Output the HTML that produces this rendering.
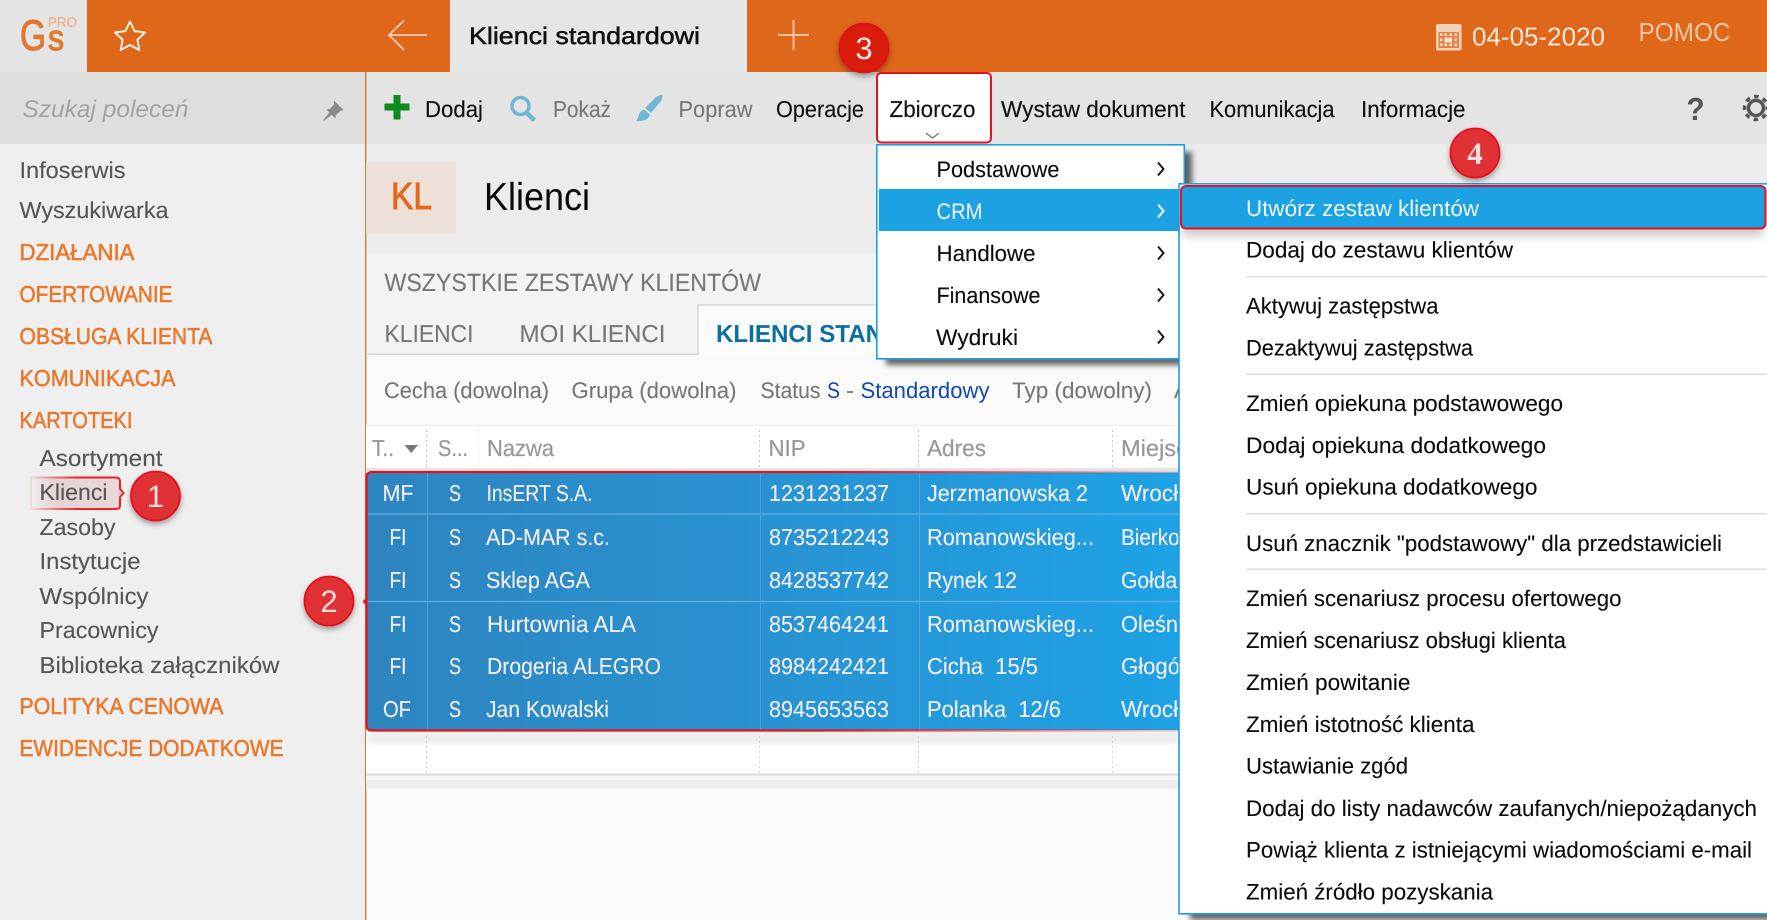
<!DOCTYPE html>
<html lang="pl"><head><meta charset="utf-8"><title>Klienci standardowi</title>
<style>
html,body{margin:0;padding:0;background:#fafafa;width:1767px;height:920px;overflow:hidden}
svg{display:block}
text{font-family:"Liberation Sans","Noto Sans CJK JP",sans-serif;font-size:23px;text-rendering:geometricPrecision}
.n{fill:#555;stroke:#555;stroke-width:.12}.o{fill:#ea772a;stroke:#ea772a;stroke-width:.55}.k{fill:#111;stroke:#111;stroke-width:.15}.g{fill:#777;stroke:#777;stroke-width:.12}.h{fill:#999;stroke:#999;stroke-width:.25}.w{fill:#f4eeee}.m{fill:#0c0c0c;font-size:22.5px;stroke:#0c0c0c;stroke-width:.12}
.b{font-size:31px}
</style></head><body>
<svg xmlns="http://www.w3.org/2000/svg" width="1767" height="920" viewBox="0 0 1767 920">
<defs>
<linearGradient id="blue" x1="0" x2="1" y1="0" y2="0"><stop offset="0" stop-color="#2d85bf"/><stop offset=".5" stop-color="#2893d3"/><stop offset="1" stop-color="#1da3e6"/></linearGradient>
<linearGradient id="redf" x1="0" x2="1" y1="0" y2="0"><stop offset="0" stop-color="#e8101c"/><stop offset=".55" stop-color="#e8101c"/><stop offset="1" stop-color="#e8101c" stop-opacity=".15"/></linearGradient>
<linearGradient id="kl" x1="0" x2="1" y1="0" y2="0"><stop offset="0" stop-color="#e6d0d0" stop-opacity="0"/><stop offset=".25" stop-color="#e6d4d4"/><stop offset="1" stop-color="#ead8d8"/></linearGradient>
<linearGradient id="klr" x1="0" x2="1" y1="0" y2="0"><stop offset="0" stop-color="#ee2024" stop-opacity=".1"/><stop offset=".5" stop-color="#ee2024"/><stop offset="1" stop-color="#ee2024"/></linearGradient>
<filter id="bl3" x="-10%" y="-10%" width="120%" height="120%"><feGaussianBlur stdDeviation="3"/></filter>
<filter id="bl6" x="-20%" y="-50%" width="140%" height="200%"><feGaussianBlur stdDeviation="5"/></filter>
<filter id="sh" x="-40%" y="-40%" width="180%" height="180%"><feDropShadow dx="0" dy="3" stdDeviation="3" flood-color="#000" flood-opacity=".35"/></filter>
</defs>

<!-- backgrounds -->
<rect width="1767" height="920" fill="#fafafa"/>
<rect x="0" y="144" width="365" height="776" fill="#efefef"/>
<rect x="0" y="72" width="365" height="72" fill="#dedede"/>
<rect x="366" y="72" width="1401" height="72" fill="#e4e4e4"/>
<rect x="366" y="144" width="1401" height="109" fill="#ececec"/>
<rect x="366" y="253" width="1401" height="102" fill="#f3f3f3"/>
<rect x="366" y="355" width="1401" height="70" fill="#fafafa"/>
<rect x="365" y="72" width="1.4" height="848" fill="#e0762f"/>

<!-- top bar -->
<rect x="0" y="0" width="87" height="72" fill="#e4e4e4"/>
<rect x="87" y="0" width="363" height="72" fill="#de6719"/>
<rect x="450" y="0" width="297" height="72" fill="#e6e6e6"/>
<rect x="747" y="0" width="1020" height="72" fill="#de6719"/>
<text x="20" y="50" style="font-size:43px" fill="#e2772f" stroke="#e2772f" stroke-width="1.2" textLength="26" lengthAdjust="spacingAndGlyphs">G</text>
<text x="48" y="50" style="font-size:36px" fill="#e2772f" stroke="#e2772f" stroke-width="1.2" textLength="16" lengthAdjust="spacingAndGlyphs">s</text>
<text x="48" y="27" style="font-size:14px" fill="#eeb28a" stroke="#eeb28a" stroke-width=".3" textLength="29" lengthAdjust="spacingAndGlyphs">PRO</text>
<path d="M130 22.500l4.600 9.600 10.400 1.400-7.600 7.200 1.900 10.300-9.300-5-9.300 5 1.900-10.300-7.600-7.200 10.400-1.400z" fill="none" stroke="#fbeee5" stroke-width="2" stroke-linejoin="round" transform="translate(0 -1)"/>
<path d="M427 35H389M404 20.500L389 35l15 15" fill="none" stroke="#f3cdb4" stroke-width="1.800"/>
<text x="469" y="44" style="font-size:24px" fill="#111" stroke="#111" stroke-width=".5" textLength="231" lengthAdjust="spacingAndGlyphs">Klienci standardowi</text>
<path d="M793.500 20v30M778 35h31" stroke="#f3cdb4" stroke-width="1.800" fill="none"/>
<!-- calendar -->
<rect x="1436" y="24" width="25.500" height="26.500" rx="2" fill="#f4d0b8"/>
<rect x="1438.500" y="32" width="20.500" height="16" fill="#e2854a"/>
<g fill="#f7dfce"><path d="M1440 33.500h2.500v2.500h-2.500zM1444.500 33.500h2.500v2.500h-2.500zM1449.500 33.500h2.500v2.500h-2.500zM1454.500 33.500h2.500v2.500h-2.500zM1440 38.500h2.500v2.500h-2.500zM1454.500 38.500h2.500v2.500h-2.500zM1440 43.500h2.500v2.500h-2.500zM1444.500 43.500h2.500v2.500h-2.500zM1449.500 43.500h2.500v2.500h-2.500zM1454.500 43.500h2.500v2.500h-2.500z"/><rect x="1444.500" y="37.500" width="7.500" height="5"/></g>
<text x="1472" y="45.500" style="font-size:26px" fill="#fbe7da" textLength="133" lengthAdjust="spacingAndGlyphs">04-05-2020</text>
<text x="1638.500" y="41" style="font-size:26px" fill="#f2c6a8" textLength="92" lengthAdjust="spacingAndGlyphs">POMOC</text>

<!-- sidebar -->
<text x="22.500" y="117" style="font-size:24px;font-style:italic" fill="#a2a2a2" textLength="166" lengthAdjust="spacingAndGlyphs">Szukaj poleceń</text>
<g fill="#8a8a8a"><path d="M334 100.500l9.500 9.500-3 .8-4.800 4.500-.3 3.200-9-9 3.200-.3 4.500-4.800z"/><path d="M323.500 120.500l7.500-9 1.800 1.800z" stroke="#8a8a8a" stroke-width="1"/></g>
<text x="19.500" y="178" class="n" textLength="106" lengthAdjust="spacingAndGlyphs">Infoserwis</text>
<text x="19.500" y="218" class="n" textLength="149" lengthAdjust="spacingAndGlyphs">Wyszukiwarka</text>
<text x="19.500" y="260" class="o" textLength="115" lengthAdjust="spacingAndGlyphs">DZIAŁANIA</text>
<text x="19.500" y="302" class="o" textLength="153" lengthAdjust="spacingAndGlyphs">OFERTOWANIE</text>
<text x="19.500" y="344" class="o" textLength="193" lengthAdjust="spacingAndGlyphs">OBSŁUGA KLIENTA</text>
<text x="19.500" y="386" class="o" textLength="156" lengthAdjust="spacingAndGlyphs">KOMUNIKACJA</text>
<text x="19.500" y="428" class="o" textLength="113" lengthAdjust="spacingAndGlyphs">KARTOTEKI</text>
<text x="39.500" y="466" class="n" textLength="123" lengthAdjust="spacingAndGlyphs">Asortyment</text>
<path d="M31 477.500h85q4 0 4 4v7.500l3.500 4-3.500 4v8q0 4-4 4h-85z" fill="url(#kl)" stroke="url(#klr)" stroke-width="2"/>
<text x="39.500" y="500" class="n" textLength="68" lengthAdjust="spacingAndGlyphs">Klienci</text>
<text x="39.500" y="535" class="n" textLength="76" lengthAdjust="spacingAndGlyphs">Zasoby</text>
<text x="39.500" y="569" class="n" textLength="101" lengthAdjust="spacingAndGlyphs">Instytucje</text>
<text x="39.500" y="604" class="n" textLength="109" lengthAdjust="spacingAndGlyphs">Wspólnicy</text>
<text x="39.500" y="638" class="n" textLength="119" lengthAdjust="spacingAndGlyphs">Pracownicy</text>
<text x="39.500" y="673" class="n" textLength="240" lengthAdjust="spacingAndGlyphs">Biblioteka załączników</text>
<text x="19.500" y="714" class="o" textLength="204" lengthAdjust="spacingAndGlyphs">POLITYKA CENOWA</text>
<text x="19.500" y="756" class="o" textLength="264" lengthAdjust="spacingAndGlyphs">EWIDENCJE DODATKOWE</text>

<!-- toolbar -->
<path d="M393.500 95h7v8.500h9v7h-9v9h-7v-9h-9v-7h9z" fill="#0f8a1f"/>
<text x="425" y="117" class="k" textLength="58" lengthAdjust="spacingAndGlyphs">Dodaj</text>
<circle cx="520.500" cy="106" r="8.500" fill="none" stroke="#6fb7d2" stroke-width="3.500"/>
<path d="M526.500 112.500l8 8" stroke="#6fb7d2" stroke-width="4.500" fill="none"/>
<text x="553" y="117" class="g" textLength="58" lengthAdjust="spacingAndGlyphs">Pokaż</text>
<path d="M662 95c1 2 0 4-1 6l-10 12-6-5 11-11c2-1 4-2 6-2z" fill="#6fb7d2"/>
<path d="M644 109.500c-4 1-5 5-6 8-.3 1.500-1 2.500-2 3.500 6 .5 13-1 14-6.500z" fill="#6fb7d2"/>
<text x="678.500" y="117" class="g" textLength="74" lengthAdjust="spacingAndGlyphs">Popraw</text>
<text x="776" y="117" class="k" textLength="88" lengthAdjust="spacingAndGlyphs">Operacje</text>
<rect x="877" y="73" width="114" height="69.500" rx="4" fill="#fff" stroke="#e8101c" stroke-width="2"/>
<text x="889.500" y="117" class="k" textLength="86" lengthAdjust="spacingAndGlyphs">Zbiorczo</text>
<path d="M926 133l6.500 5 6.500-5" fill="none" stroke="#777" stroke-width="1.300"/>
<text x="1001" y="117" class="k" textLength="184.500" lengthAdjust="spacingAndGlyphs">Wystaw dokument</text>
<text x="1209.500" y="117" class="k" textLength="125" lengthAdjust="spacingAndGlyphs">Komunikacja</text>
<text x="1361" y="117" class="k" textLength="104.500" lengthAdjust="spacingAndGlyphs">Informacje</text>
<text x="1686.500" y="120" style="font-size:32px;font-weight:700" fill="#555" textLength="18" lengthAdjust="spacingAndGlyphs">?</text>
<circle cx="1756" cy="108" r="7.500" fill="none" stroke="#555" stroke-width="3.500"/>
<circle cx="1756" cy="108" r="11.500" fill="none" stroke="#555" stroke-width="3.500" stroke-dasharray="4.500 4.530" stroke-dashoffset="2.250"/>

<!-- title -->
<rect x="366" y="162" width="90" height="72" fill="#ede0d9"/>
<text x="391" y="209" style="font-size:38px" fill="#e2691b" stroke="#e2691b" stroke-width=".9" textLength="41" lengthAdjust="spacingAndGlyphs">KL</text>
<text x="484" y="210" style="font-size:39px" fill="#0a0a0a" textLength="106" lengthAdjust="spacingAndGlyphs">Klienci</text>
<text x="384.500" y="291" style="font-size:25px" class="g" textLength="376.500" lengthAdjust="spacingAndGlyphs">WSZYSTKIE ZESTAWY KLIENTÓW</text>

<!-- tabs -->
<rect x="366" y="353.500" width="332" height="1.500" fill="#d8d8d8"/>
<rect x="698.500" y="305.500" width="200" height="50" fill="#fbfbfb"/>
<path d="M698 355V305H880" fill="none" stroke="#dcdcdc" stroke-width="1.800"/>
<text x="384.500" y="342" style="font-size:24.500px" class="g" textLength="89" lengthAdjust="spacingAndGlyphs">KLIENCI</text>
<text x="519.500" y="342" style="font-size:24.500px" class="g" textLength="146" lengthAdjust="spacingAndGlyphs">MOI KLIENCI</text>
<text x="716" y="342" style="font-size:24.500px;font-weight:700" fill="#0b709f" textLength="285" lengthAdjust="spacingAndGlyphs">KLIENCI STANDARDOWI</text>

<!-- filters -->
<text x="384" y="398" style="font-size:22.500px" class="g" textLength="165" lengthAdjust="spacingAndGlyphs">Cecha (dowolna)</text>
<text x="571.500" y="398" style="font-size:22.500px" class="g" textLength="165" lengthAdjust="spacingAndGlyphs">Grupa (dowolna)</text>
<text x="760.500" y="398" style="font-size:22.500px" class="g" textLength="60" lengthAdjust="spacingAndGlyphs">Status</text>
<text x="827" y="398" style="font-size:22.500px" fill="#1448b0" textLength="13" lengthAdjust="spacingAndGlyphs">S</text>
<text x="846" y="398" style="font-size:22.500px" class="g" textLength="8" lengthAdjust="spacingAndGlyphs">-</text>
<text x="860.500" y="398" style="font-size:22.500px" fill="#1448b0" textLength="129" lengthAdjust="spacingAndGlyphs">Standardowy</text>
<text x="1012" y="398" style="font-size:22.500px" class="g" textLength="140" lengthAdjust="spacingAndGlyphs">Typ (dowolny)</text>
<text x="1174" y="398" style="font-size:22.500px" class="g">Adres</text>

<!-- table -->
<rect x="366" y="425" width="1401" height="47" fill="#fff"/>
<rect x="366" y="424.500" width="1401" height="1.500" fill="#f0f0f0"/>
<rect x="366" y="468" width="1401" height="3" fill="#e4e4e4"/>
<g stroke="#c9c9c9" stroke-width="1" stroke-dasharray="2 3" fill="none"><path d="M426.500 430V470M759.500 430V470M918.500 430V470M1112.500 430V470"/></g>
<g stroke="#efefef" stroke-width="1" stroke-dasharray="2 3" fill="none"><path d="M479 430V470"/></g>
<text x="372" y="456" class="h" textLength="22" lengthAdjust="spacingAndGlyphs">T..</text>
<path d="M404.500 445h13.500l-6.700 8z" fill="#777"/>
<text x="438" y="456" class="h" textLength="30" lengthAdjust="spacingAndGlyphs">S...</text>
<text x="487" y="456" class="h" textLength="67" lengthAdjust="spacingAndGlyphs">Nazwa</text>
<text x="768.500" y="456" class="h" textLength="37" lengthAdjust="spacingAndGlyphs">NIP</text>
<text x="927" y="456" class="h" textLength="59" lengthAdjust="spacingAndGlyphs">Adres</text>
<text x="1121" y="456" class="h" textLength="80" lengthAdjust="spacingAndGlyphs">Miejsce</text>

<rect x="366" y="731" width="1401" height="43" fill="#fff"/>
<rect x="366" y="733" width="820" height="8" fill="#000" opacity=".12" filter="url(#bl6)"/>
<g stroke="#d3d3d3" stroke-width="1" stroke-dasharray="2 3" fill="none"><path d="M426.500 736V778M759.500 736V778M918.500 736V778M1112.500 736V778"/></g>
<rect x="366" y="773.500" width="1401" height="2" fill="#d9d9d9"/>
<rect x="366" y="775.500" width="1401" height="4.500" fill="#f6f6f6"/>
<rect x="366" y="780" width="1401" height="9" fill="#eeeeee"/>

<rect x="367" y="472.500" width="830" height="257.500" rx="5" fill="url(#blue)"/>
<g stroke="#5fb0e2" stroke-width="1.200" fill="none"><path d="M367 514H1190M367 601.500H1190"/></g>
<g stroke="#4da4dd" stroke-width="1" fill="none"><path d="M427.500 473V730M760.500 473V730M919.500 473V730"/></g>
<rect x="366.500" y="472" width="832" height="258.500" rx="5" fill="none" stroke="url(#redf)" stroke-width="2.200"/>
<path d="M367 597l-4.500 4.500 4.500 4.500z" fill="#e8101c"/>

<g class="w" stroke="#f4eeee" stroke-width=".12">
<text class="w" x="382.500" y="501" textLength="31" lengthAdjust="spacingAndGlyphs">MF</text>
<text class="w" x="389.500" y="545" textLength="17" lengthAdjust="spacingAndGlyphs">FI</text>
<text class="w" x="389.500" y="588" textLength="17" lengthAdjust="spacingAndGlyphs">FI</text>
<text class="w" x="389.500" y="632" textLength="17" lengthAdjust="spacingAndGlyphs">FI</text>
<text class="w" x="389.500" y="674" textLength="17" lengthAdjust="spacingAndGlyphs">FI</text>
<text class="w" x="383" y="717" textLength="28" lengthAdjust="spacingAndGlyphs">OF</text>
<text class="w" x="449" y="501" textLength="12" lengthAdjust="spacingAndGlyphs">S</text>
<text class="w" x="449" y="545" textLength="12" lengthAdjust="spacingAndGlyphs">S</text>
<text class="w" x="449" y="588" textLength="12" lengthAdjust="spacingAndGlyphs">S</text>
<text class="w" x="449" y="632" textLength="12" lengthAdjust="spacingAndGlyphs">S</text>
<text class="w" x="449" y="674" textLength="12" lengthAdjust="spacingAndGlyphs">S</text>
<text class="w" x="449" y="717" textLength="12" lengthAdjust="spacingAndGlyphs">S</text>
<text class="w" x="486.500" y="501" textLength="106" lengthAdjust="spacingAndGlyphs">InsERT S.A.</text>
<text class="w" x="486" y="545" textLength="124" lengthAdjust="spacingAndGlyphs">AD-MAR s.c.</text>
<text class="w" x="486" y="588" textLength="104" lengthAdjust="spacingAndGlyphs">Sklep AGA</text>
<text class="w" x="487" y="632" textLength="149" lengthAdjust="spacingAndGlyphs">Hurtownia ALA</text>
<text class="w" x="487" y="674" textLength="174" lengthAdjust="spacingAndGlyphs">Drogeria ALEGRO</text>
<text class="w" x="486" y="717" textLength="123" lengthAdjust="spacingAndGlyphs">Jan Kowalski</text>
<text class="w" x="769" y="501" textLength="120" lengthAdjust="spacingAndGlyphs">1231231237</text>
<text class="w" x="769" y="545" textLength="120" lengthAdjust="spacingAndGlyphs">8735212243</text>
<text class="w" x="769" y="588" textLength="120" lengthAdjust="spacingAndGlyphs">8428537742</text>
<text class="w" x="769" y="632" textLength="120" lengthAdjust="spacingAndGlyphs">8537464241</text>
<text class="w" x="769" y="674" textLength="120" lengthAdjust="spacingAndGlyphs">8984242421</text>
<text class="w" x="769" y="717" textLength="120" lengthAdjust="spacingAndGlyphs">8945653563</text>
<text class="w" x="927" y="501" textLength="161" lengthAdjust="spacingAndGlyphs">Jerzmanowska 2</text>
<text class="w" x="927" y="545" textLength="167" lengthAdjust="spacingAndGlyphs">Romanowskieg...</text>
<text class="w" x="927" y="588" textLength="90" lengthAdjust="spacingAndGlyphs">Rynek 12</text>
<text class="w" x="927" y="632" textLength="167" lengthAdjust="spacingAndGlyphs">Romanowskieg...</text>
<text class="w" x="927" y="674" textLength="111" lengthAdjust="spacingAndGlyphs">Cicha&#160; 15/5</text>
<text class="w" x="927" y="717" textLength="134" lengthAdjust="spacingAndGlyphs">Polanka&#160; 12/6</text>
<text class="w" x="1121" y="501" textLength="86" lengthAdjust="spacingAndGlyphs">Wrocław</text>
<text class="w" x="1121" y="545" textLength="100" lengthAdjust="spacingAndGlyphs">Bierkowice</text>
<text class="w" x="1121" y="588" textLength="68" lengthAdjust="spacingAndGlyphs">Gołdap</text>
<text class="w" x="1121" y="632" textLength="85" lengthAdjust="spacingAndGlyphs">Oleśnica</text>
<text class="w" x="1121" y="674" textLength="75" lengthAdjust="spacingAndGlyphs">Głogów</text>
<text class="w" x="1121" y="717" textLength="86" lengthAdjust="spacingAndGlyphs">Wrocław</text>
</g>

<!-- first menu -->
<rect x="886" y="152" width="306" height="213" fill="#000" opacity=".6" filter="url(#bl3)"/>
<rect x="876.800" y="144.800" width="307.500" height="214" fill="#fff" stroke="#1f9fe0" stroke-width="1.600"/>
<rect x="879" y="189" width="300" height="42" fill="#1ca1e2"/>
<text x="936.500" y="177" class="m" textLength="123" lengthAdjust="spacingAndGlyphs">Podstawowe</text>
<text x="936.500" y="219" style="font-size:22.500px" fill="#eef7fd" textLength="46" lengthAdjust="spacingAndGlyphs">CRM</text>
<text x="936.500" y="261" class="m" textLength="99" lengthAdjust="spacingAndGlyphs">Handlowe</text>
<text x="936.500" y="303" class="m" textLength="104" lengthAdjust="spacingAndGlyphs">Finansowe</text>
<text x="936" y="345" class="m" textLength="82" lengthAdjust="spacingAndGlyphs">Wydruki</text>
<g fill="none" stroke="#1a1a1a" stroke-width="2"><path d="M1158 162.500l5.500 6.500-5.500 6.500"/><path d="M1158 246.500l5.500 6.500-5.500 6.500"/><path d="M1158 288.500l5.500 6.500-5.500 6.500"/><path d="M1158 330.500l5.500 6.500-5.500 6.500"/></g>
<path d="M1158 204.500l5.500 6.500-5.500 6.500" fill="none" stroke="#f2f9fe" stroke-width="2"/>

<!-- second menu -->
<rect x="1190" y="195" width="600" height="725" fill="#000" opacity=".6" filter="url(#bl3)"/>
<rect x="1179" y="183.800" width="600" height="730" fill="#fff" stroke="#1f9fe0" stroke-width="1.600"/>
<rect x="1183" y="222" width="580" height="14" fill="#000" opacity=".22" filter="url(#bl6)"/>
<rect x="1181" y="186" width="584.500" height="42.500" rx="5" fill="#1ca1e2" stroke="#e8101c" stroke-width="2"/>
<g fill="#dedede"><rect x="1246" y="276" width="521" height="1.500"/><rect x="1246" y="373.500" width="521" height="1.500"/><rect x="1246" y="513" width="521" height="1.500"/><rect x="1246" y="568.500" width="521" height="1.500"/></g>
<text x="1246" y="216" style="font-size:22.500px" fill="#f0f8fd" textLength="233" lengthAdjust="spacingAndGlyphs">Utwórz zestaw klientów</text>
<text class="m" x="1246" y="257.500" textLength="267" lengthAdjust="spacingAndGlyphs">Dodaj do zestawu klientów</text>
<text class="m" x="1246" y="313.500" textLength="192.500" lengthAdjust="spacingAndGlyphs">Aktywuj zastępstwa</text>
<text class="m" x="1246" y="355.500" textLength="227" lengthAdjust="spacingAndGlyphs">Dezaktywuj zastępstwa</text>
<text class="m" x="1246" y="411" textLength="317" lengthAdjust="spacingAndGlyphs">Zmień opiekuna podstawowego</text>
<text class="m" x="1246" y="453" textLength="300" lengthAdjust="spacingAndGlyphs">Dodaj opiekuna dodatkowego</text>
<text class="m" x="1246" y="494.500" textLength="291.500" lengthAdjust="spacingAndGlyphs">Usuń opiekuna dodatkowego</text>
<text class="m" x="1246" y="551" textLength="476" lengthAdjust="spacingAndGlyphs">Usuń znacznik "podstawowy" dla przedstawicieli</text>
<text class="m" x="1246" y="606" textLength="375.500" lengthAdjust="spacingAndGlyphs">Zmień scenariusz procesu ofertowego</text>
<text class="m" x="1246" y="648" textLength="320" lengthAdjust="spacingAndGlyphs">Zmień scenariusz obsługi klienta</text>
<text class="m" x="1246" y="690" textLength="164.500" lengthAdjust="spacingAndGlyphs">Zmień powitanie</text>
<text class="m" x="1246" y="732" textLength="228.500" lengthAdjust="spacingAndGlyphs">Zmień istotność klienta</text>
<text class="m" x="1246" y="773.500" textLength="162" lengthAdjust="spacingAndGlyphs">Ustawianie zgód</text>
<text class="m" x="1246" y="816" textLength="511" lengthAdjust="spacingAndGlyphs">Dodaj do listy nadawców zaufanych/niepożądanych</text>
<text class="m" x="1246" y="857.500" textLength="506" lengthAdjust="spacingAndGlyphs">Powiąż klienta z istniejącymi wiadomościami e-mail</text>
<text class="m" x="1246" y="899.500" textLength="247" lengthAdjust="spacingAndGlyphs">Zmień źródło pozyskania</text>

<!-- badges -->
<g filter="url(#sh)">
<circle cx="155.500" cy="496" r="24.500" fill="#e03035" stroke="#e6101c" stroke-width="1.800"/>
<circle cx="329" cy="601" r="24.500" fill="#e03035" stroke="#e6101c" stroke-width="1.800"/>
<circle cx="864" cy="48" r="24.500" fill="#da1a0c" stroke="#e6101c" stroke-width="1.800"/>
<circle cx="1475" cy="153" r="24.500" fill="#e03035" stroke="#e6101c" stroke-width="1.800"/>
</g>
<text class="b" x="155.500" y="507" text-anchor="middle" fill="#f6dede">1</text>
<text class="b" x="329" y="612" text-anchor="middle" fill="#f6dede">2</text>
<text class="b" x="864" y="59" text-anchor="middle" fill="#f9e4e0">3</text>
<text class="b" x="1475" y="164" text-anchor="middle" fill="#f6dede" style="font-weight:700;font-family:'Liberation Serif',serif">4</text>
</svg>
</body></html>
